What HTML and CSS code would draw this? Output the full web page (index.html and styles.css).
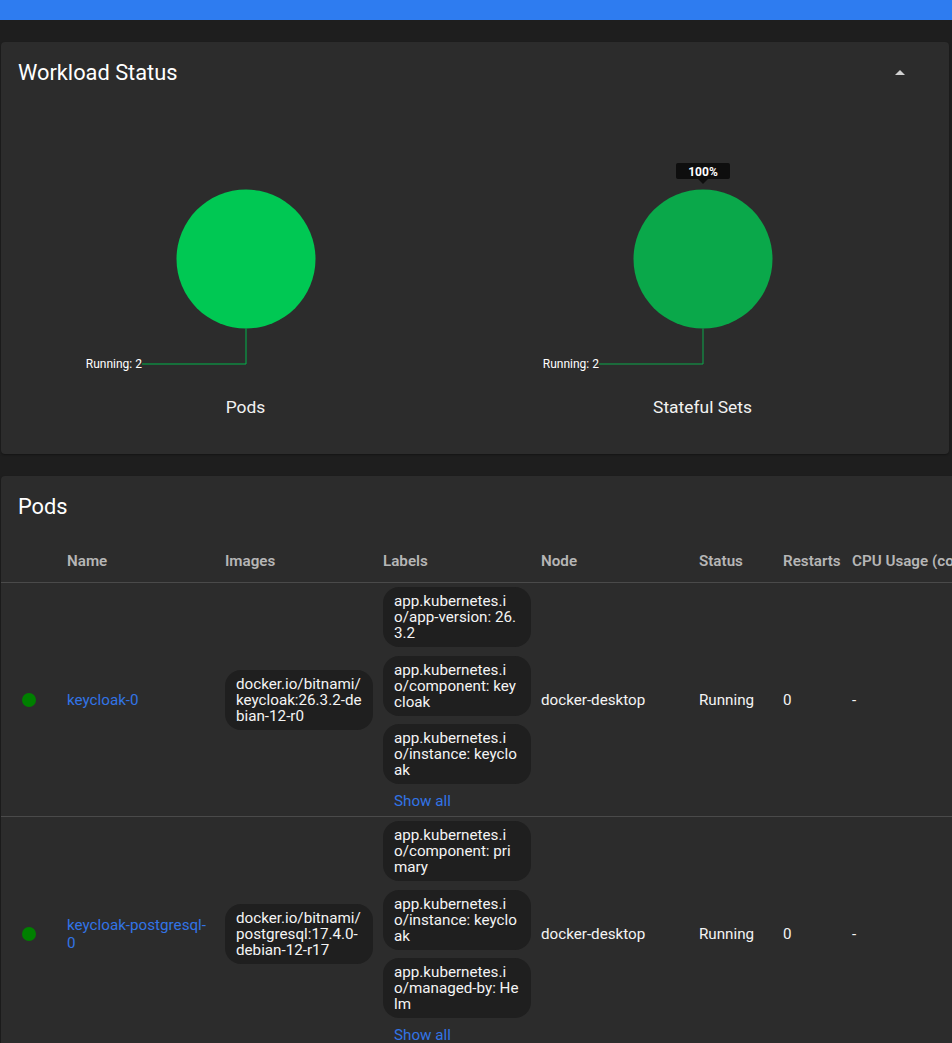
FILE: index.html
```html
<!DOCTYPE html>
<html lang="en">
<head>
<meta charset="utf-8">
<title>Workload Status</title>
<link rel="stylesheet" href="styles.css">
</head>
<body>
<div class="appbar"></div>
<main class="content">
  <section class="card card-workload">
    <header class="card-head">
      <h2 class="card-title">Workload Status</h2>
      <button class="collapse" aria-label="Collapse">
        <svg viewBox="0 0 24 24" width="24" height="24"><path d="M7 14l5-5 5 5z"/></svg>
      </button>
    </header>
    <div class="charts">
      <figure class="chart">
        <svg class="pie" viewBox="0 0 457 307" width="457" height="307">
          <circle cx="229" cy="171" r="69.5" fill="#00c853"/>
          <polyline points="229,240.5 229,276 125,276" fill="none" stroke="#00b44a" stroke-width="1"/>
          <text x="125" y="276" class="pie-label" text-anchor="end" dominant-baseline="central">Running: 2</text>
        </svg>
        <figcaption>Pods</figcaption>
      </figure>
      <figure class="chart">
        <svg class="pie" viewBox="0 0 457 307" width="457" height="307">
          <circle cx="229" cy="171" r="69.5" fill="#0aa84a"/>
          <polyline points="229,240.5 229,276 125,276" fill="none" stroke="#0aa84a" stroke-width="1"/>
          <text x="125" y="276" class="pie-label" text-anchor="end" dominant-baseline="central">Running: 2</text>
          <rect x="202" y="75" width="54" height="16" rx="2" fill="#0e0e0e"/>
          <path d="M224 91h10l-5 5z" fill="#0e0e0e"/>
          <text x="229" y="83.5" class="tip-label" text-anchor="middle" dominant-baseline="central">100%</text>
        </svg>
        <figcaption>Stateful Sets</figcaption>
      </figure>
    </div>
  </section>

  <section class="card card-pods">
    <h2 class="card-title pods-title">Pods</h2>
    <table class="pods-table">
      <colgroup>
        <col class="c-dot"><col class="c-wide"><col class="c-wide"><col class="c-wide"><col class="c-wide">
        <col class="c-status"><col class="c-restarts"><col class="c-cpu"><col class="c-mem"><col class="c-age">
      </colgroup>
      <thead>
        <tr>
          <th></th><th>Name</th><th>Images</th><th>Labels</th><th>Node</th>
          <th>Status</th><th>Restarts</th><th>CPU Usage (cores)</th><th>Memory Usage (MiB)</th><th>Age</th>
        </tr>
      </thead>
      <tbody>
        <tr>
          <td class="dot-cell"><span class="dot"></span></td>
          <td class="name-cell"><a href="#" class="link">keycloak-0</a></td>
          <td><span class="chip">docker.io/bitnami/keycloak:26.3.2-debian-12-r0</span></td>
          <td>
            <div class="chips">
              <span class="chip">app.kubernetes.io/app-version: 26.3.2</span>
              <span class="chip">app.kubernetes.io/component: keycloak</span>
              <span class="chip">app.kubernetes.io/instance: keycloak</span>
            </div>
            <a href="#" class="link show-all">Show all</a>
          </td>
          <td>docker-desktop</td>
          <td>Running</td>
          <td>0</td>
          <td>-</td>
          <td>-</td>
          <td>-</td>
        </tr>
        <tr>
          <td class="dot-cell"><span class="dot"></span></td>
          <td class="name-cell"><a href="#" class="link">keycloak-postgresql-0</a></td>
          <td><span class="chip">docker.io/bitnami/postgresql:17.4.0-debian-12-r17</span></td>
          <td>
            <div class="chips">
              <span class="chip">app.kubernetes.io/component: primary</span>
              <span class="chip">app.kubernetes.io/instance: keycloak</span>
              <span class="chip">app.kubernetes.io/managed-by: Helm</span>
            </div>
            <a href="#" class="link show-all">Show all</a>
          </td>
          <td>docker-desktop</td>
          <td>Running</td>
          <td>0</td>
          <td>-</td>
          <td>-</td>
          <td>-</td>
        </tr>
      </tbody>
    </table>
  </section>
</main>
</body>
</html>
```
FILE: styles.css
```css
html {
  overflow: hidden;
}
body {
  margin: 0;
  background: #1e1e1e;
  color: #f0f0f0;
  font-family: Roboto, "Liberation Sans", Arial, sans-serif;
  font-size: 15.2px;
}
.appbar {
  height: 20px;
  background: #2e7cf0;
}
.content {
  padding: 22px 0 0 1px;
  display: flex;
  flex-direction: column;
  gap: 22px;
  align-items: flex-start;
}
.card {
  background: #2c2c2c;
  border-radius: 4px;
  box-shadow: 0 1px 2px rgba(0, 0, 0, 0.35);
}
.card-workload {
  width: 948px;
  padding-bottom: 35px;
}
.card-pods {
  width: 1257px;
}
.card-head {
  display: flex;
  align-items: center;
  justify-content: space-between;
  padding: 16px 37px 0 17px;
}
.card-title {
  margin: 0;
  font-size: 21.8px;
  font-weight: 400;
  line-height: 30px;
  color: #ffffff;
}
.pods-title {
  padding: 16px 17px 18px;
}
.collapse {
  width: 24px;
  height: 24px;
  padding: 0;
  border: 0;
  background: none;
  display: flex;
}
.collapse svg {
  fill: #d0d0d0;
}
.charts {
  display: flex;
  padding: 0 18px 0 16px;
}
.chart {
  margin: 0;
  flex: 1 1 0;
  display: flex;
  flex-direction: column;
  align-items: center;
}
.pie {
  display: block;
}
.pie-label {
  font-size: 12px;
  fill: #ffffff;
  font-family: Roboto, "Liberation Sans", sans-serif;
}
.tip-label {
  font-size: 12px;
  font-weight: 700;
  fill: #ffffff;
  font-family: Roboto, "Liberation Sans", sans-serif;
}
.chart figcaption {
  font-size: 17.4px;
  line-height: 24px;
  color: #f2f2f2;
}
.pods-table {
  border-collapse: collapse;
  table-layout: fixed;
  width: 1257px;
}
.c-dot { width: 62px; }
.c-wide { width: 158px; }
.c-status { width: 84px; }
.c-restarts { width: 69px; }
.c-cpu { width: 160px; }
.c-mem { width: 150px; }
.c-age { width: 100px; }
.pods-table th {
  height: 42px;
  padding: 0 4px;
  text-align: left;
  font-weight: 600;
  color: #b6b6b6;
  white-space: nowrap;
  overflow: hidden;
  border-bottom: 1px solid #4a4a4a;
}
.pods-table td {
  padding: 4px 6px 4px 4px;
  vertical-align: middle;
  line-height: 16px;
  color: #f4f4f4;
  border-bottom: 1px solid #4a4a4a;
}
.pods-table td.dot-cell {
  padding-left: 21px;
}
.pods-table td.name-cell {
  padding-right: 10px;
  line-height: 18px;
}
.dot {
  display: block;
  width: 14px;
  height: 14px;
  border-radius: 50%;
  background: #008000;
}
.link {
  color: #3274e6;
  text-decoration: none;
}
.chips {
  display: flex;
  flex-direction: column;
  gap: 8.5px;
}
.chip {
  display: block;
  background: #1f1f1f;
  border-radius: 16px;
  padding: 6px 11px;
  line-height: 16px;
  word-break: break-all;
  color: #f4f4f4;
}
.show-all {
  display: flex;
  align-items: center;
  height: 22px;
  margin-top: 6px;
  padding-left: 11px;
}
```
